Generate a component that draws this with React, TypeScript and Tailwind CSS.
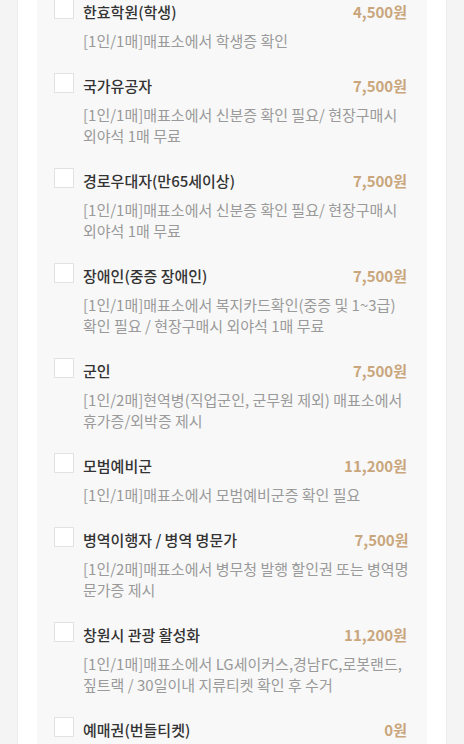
const items: { title: string; price: string; desc: string[] }[] = [
  { title: "한효학원(학생)", price: "4,500원", desc: ["[1인/1매]매표소에서 학생증 확인"] },
  {
    title: "국가유공자",
    price: "7,500원",
    desc: ["[1인/1매]매표소에서 신분증 확인 필요/ 현장구매시", "외야석 1매 무료"],
  },
  {
    title: "경로우대자(만65세이상)",
    price: "7,500원",
    desc: ["[1인/1매]매표소에서 신분증 확인 필요/ 현장구매시", "외야석 1매 무료"],
  },
  {
    title: "장애인(중증 장애인)",
    price: "7,500원",
    desc: ["[1인/1매]매표소에서 복지카드확인(중증 및 1~3급)", "확인 필요 / 현장구매시 외야석 1매 무료"],
  },
  {
    title: "군인",
    price: "7,500원",
    desc: ["[1인/2매]현역병(직업군인, 군무원 제외) 매표소에서", "휴가증/외박증 제시"],
  },
  { title: "모범예비군", price: "11,200원", desc: ["[1인/1매]매표소에서 모범예비군증 확인 필요"] },
  {
    title: "병역이행자 / 병역 명문가",
    price: "7,500원",
    desc: ["[1인/2매]매표소에서 병무청 발행 할인권 또는 병역명", "문가증 제시"],
  },
  {
    title: "창원시 관광 활성화",
    price: "11,200원",
    desc: ["[1인/1매]매표소에서 LG세이커스,경남FC,로봇랜드,", "짚트랙 / 30일이내 지류티켓 확인 후 수거"],
  },
  { title: "예매권(번들티켓)", price: "0원", desc: [] },
];

function Row({ title, price, desc }: { title: string; price: string; desc: string[] }) {
  return (
    <li className="flex items-start gap-[9px]">
      <span className="mt-[-2px] h-[20px] w-[20px] shrink-0 border border-[#e2e2e2] bg-white" />
      <div className="flex-1">
        <div className="flex h-[22px] items-center justify-between">
          <span className="text-[15px] font-medium text-[#333]">{title}</span>
          <span className="text-[15px] font-bold text-[#c9a67c]">{price}</span>
        </div>
        {desc.length > 0 && (
          <p className="mt-[7px] text-[15px] leading-[21px] text-[#9a9a9a]">
            {desc.map((line, i) => (
              <span key={i} className="block whitespace-nowrap">
                {line}
              </span>
            ))}
          </p>
        )}
      </div>
    </li>
  );
}

export default function App() {
  return (
    <div
      className="h-[744px] overflow-hidden bg-[#f4f4f4] px-[17px]"
      style={{ fontFamily: '"Noto Sans CJK KR", "Noto Sans", sans-serif' }}
    >
      <div className="h-full border-x border-[#ececec] bg-white px-[19px]">
        <div className="h-full bg-[#f8f8f8] pl-[17px] pr-[20px] pt-px">
          <ul className="flex flex-col gap-[24px]">
            {items.map((it) => (
              <Row key={it.title} {...it} />
            ))}
          </ul>
        </div>
      </div>
    </div>
  );
}
